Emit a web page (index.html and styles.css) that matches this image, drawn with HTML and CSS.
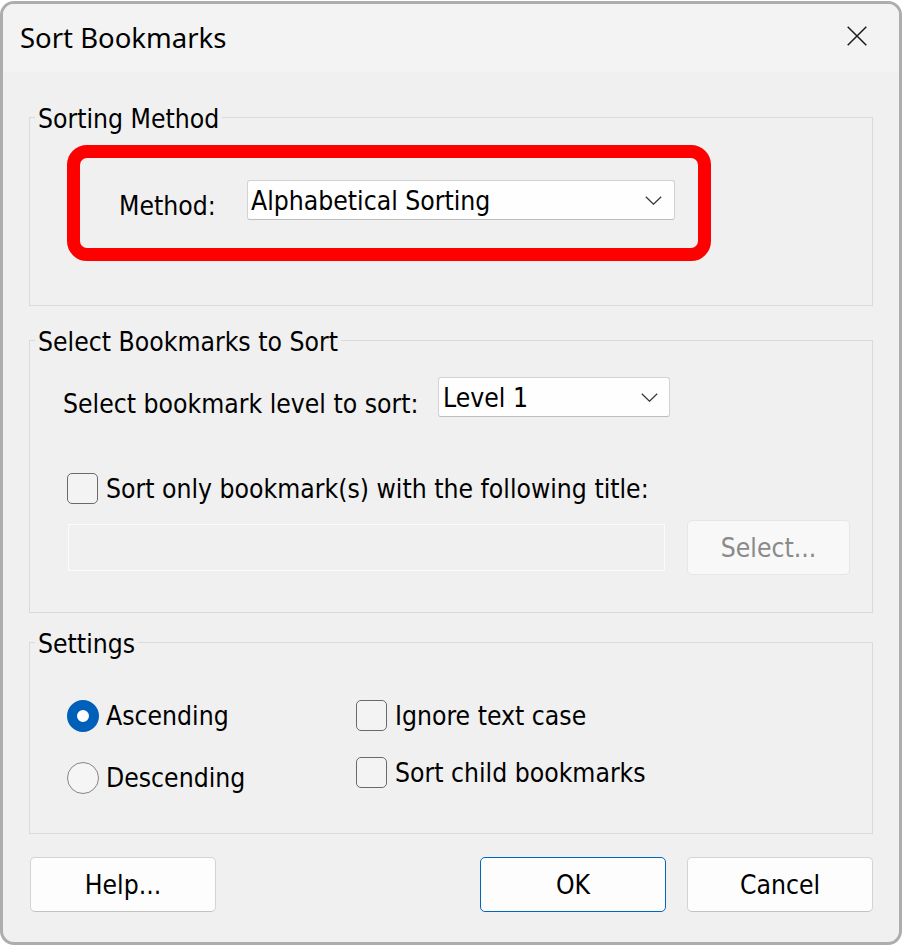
FILE: index.html
```html
<!DOCTYPE html>
<html lang="en">
<head>
<meta charset="utf-8">
<title>Sort Bookmarks</title>
<link rel="stylesheet" href="styles.css">
</head>
<body>
<div class="dialog">
  <div class="titlebar">
    <span class="title">Sort Bookmarks</span>
    <svg class="close" width="20" height="20" viewBox="0 0 20 20" aria-label="Close"><path d="M0.7 0.7L19.3 19.3M19.3 0.7L0.7 19.3"/></svg>
  </div>
  <div class="content">
    <fieldset class="group g1">
      <legend>Sorting Method</legend>
      <div class="highlight">
        <span class="label method-label">Method:</span>
        <div class="select select-method">
          <span class="select-text">Alphabetical Sorting</span>
          <svg class="chev" width="17" height="9" viewBox="0 0 17 9"><path d="M0.8 0.8L8.5 8.2L16.2 0.8"/></svg>
        </div>
      </div>
    </fieldset>

    <fieldset class="group g2">
      <legend>Select Bookmarks to Sort</legend>
      <div class="level-row">
        <span class="label level-label">Select bookmark level to sort:</span>
        <div class="select select-level">
          <span class="select-text">Level 1</span>
          <svg class="chev" width="17" height="9" viewBox="0 0 17 9"><path d="M0.8 0.8L8.5 8.2L16.2 0.8"/></svg>
        </div>
      </div>
      <div class="opt only-row"><span class="checkbox"></span><span>Sort only bookmark(s) with the following title:</span></div>
      <div class="title-row">
        <div class="text-input"></div>
        <div class="btn btn-disabled">Select...</div>
      </div>
    </fieldset>

    <fieldset class="group g3">
      <legend>Settings</legend>
      <div class="settings">
        <div class="col col1">
          <div class="opt"><span class="radio on"></span><span>Ascending</span></div>
          <div class="opt"><span class="radio"></span><span>Descending</span></div>
        </div>
        <div class="col col2">
          <div class="opt"><span class="checkbox"></span><span>Ignore text case</span></div>
          <div class="opt"><span class="checkbox"></span><span>Sort child bookmarks</span></div>
        </div>
      </div>
    </fieldset>

    <div class="buttons">
      <div class="btn btn-help">Help...</div>
      <div class="spacer"></div>
      <div class="btn btn-ok">OK</div>
      <div class="btn btn-cancel">Cancel</div>
    </div>
  </div>
</div>
</body>
</html>
```

FILE: styles.css
```css
html, body {
  margin: 0;
  padding: 0;
  background: #ffffff;
  overflow: hidden;
}

body {
  width: 902px;
  height: 945px;
}

.dialog {
  box-sizing: border-box;
  margin-top: 1px;
  width: 902px;
  height: 944px;
  border: 3px solid #adadad;
  border-radius: 14px;
  background: #f0f0f0;
  overflow: hidden;
  font-family: "DejaVu Sans Condensed", "DejaVu Sans", sans-serif;
  font-stretch: condensed;
  font-size: 26.3px;
  line-height: 28px;
  color: #000;
}

.titlebar {
  height: 68px;
  background: #f3f3f3;
  display: flex;
  align-items: center;
  justify-content: space-between;
  padding: 0 32px 0 17px;
}

.title {
  font-family: "Noto Sans", "Open Sans", sans-serif;
  font-stretch: normal;
  font-size: 27.5px;
  line-height: 36px;
  color: #000;
}

.close {
  margin-bottom: 5px;
}
.close path {
  stroke: #1b1b1b;
  stroke-width: 1.5;
  fill: none;
}

.content {
  padding: 0 26px;
}

.group {
  margin: 0;
  padding: 0;
  border: 1px solid #dadada;
  min-width: 0;
}

.group legend {
  margin-left: 5px;
  padding: 0 3px;
  height: 28px;
  line-height: 32px;
}

.g1 {
  margin-top: 31px;
  padding-bottom: 44px;
}
.g2 {
  margin-top: 20px;
  padding-bottom: 37px;
}
.g3 {
  margin-top: 15px;
  padding-bottom: 39px;
}

/* Sorting method */
.highlight {
  box-sizing: border-box;
  margin: 14px 0 0 37px;
  width: 644px;
  height: 116px;
  border: 13px solid #ff0000;
  border-radius: 20px;
  display: flex;
  align-items: flex-start;
  padding: 22px 0 0 39px;
}

.method-label {
  width: 128px;
  margin-top: 12px;
}

.select {
  box-sizing: border-box;
  height: 40px;
  background: #fefefe;
  border: 1px solid #d2d2d2;
  border-bottom-color: #bcbcbc;
  border-radius: 3px;
  display: flex;
  align-items: center;
  justify-content: space-between;
}

.select-method {
  width: 428px;
  padding: 0 12px 0 3px;
}

.select-level {
  width: 232px;
  padding: 0 11px 0 4px;
}

.select-text {
  padding-top: 2px;
}

.chev path {
  stroke: #3a3a3a;
  stroke-width: 1.3;
  fill: none;
}

/* Select bookmarks */
.level-row {
  margin: 23px 0 0 33px;
  display: flex;
  align-items: flex-start;
}

.level-label {
  width: 375px;
  margin-top: 13px;
}

.opt {
  display: flex;
  align-items: center;
  white-space: nowrap;
}

.only-row {
  margin: 55px 0 0 37px;
}

.checkbox {
  box-sizing: border-box;
  width: 31px;
  height: 31px;
  border: 1.5px solid #6a6a6a;
  border-radius: 5px;
  background: #f3f3f3;
  margin-right: 8px;
  flex: none;
}

.radio {
  box-sizing: border-box;
  width: 32px;
  height: 32px;
  border-radius: 50%;
  border: 1.5px solid #858585;
  background: #f5f5f5;
  margin-right: 7px;
  flex: none;
}

.radio.on {
  border: 10px solid #005fb8;
  background: #ffffff;
}

.title-row {
  margin: 16px 0 0 38px;
  display: flex;
  align-items: center;
}

.text-input {
  box-sizing: border-box;
  width: 597px;
  height: 47px;
  border: 1px solid #fbfbfb;
  background: #f0f0f0;
  margin-right: 22px;
}

.btn {
  box-sizing: border-box;
  width: 186px;
  height: 55px;
  border: 1px solid #d3d3d3;
  border-bottom-color: #c2c2c2;
  border-radius: 5px;
  background: #fdfdfd;
  display: flex;
  align-items: center;
  justify-content: center;
}

.btn-disabled {
  width: 163px;
  background: #f8f8f8;
  border-color: #e6e6e6;
  color: #8a8a8a;
}

/* Settings */
.settings {
  margin: 44px 0 0 37px;
  display: flex;
  align-items: flex-start;
}

.col {
  display: flex;
  flex-direction: column;
}

.col1 {
  width: 289px;
  gap: 30px;
}

.col2 {
  gap: 26px;
}

/* Bottom buttons */
.buttons {
  margin-top: 23px;
  display: flex;
  align-items: center;
  gap: 21px;
}

.btn-help {
  margin-left: 1px;
}

.spacer {
  flex: 1;
}

.btn-ok {
  border: 1px solid #0067c0;
}
```
